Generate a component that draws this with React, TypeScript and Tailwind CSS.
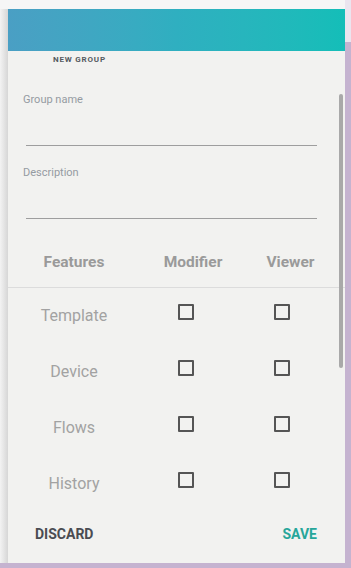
import React from 'react'

const FEATURES = ['Template', 'Device', 'Flows', 'History']

function Box() {
  return <span className="block w-4 h-4 border-2 border-[#555555] rounded-[1px]" />
}

function Field({ label }: { label: string }) {
  return (
    <div className="flex flex-col">
      <span className="pl-[15px] text-[11px] leading-[14px] text-[#959ba2]">{label}</span>
      <div className="ml-[18px] w-[291px] h-[39px] border-b border-[#9e9e9e]" />
    </div>
  )
}

export default function App() {
  return (
    <div
      className="w-[351px] h-[568px] flex bg-[#c5b3d0] overflow-hidden"
      style={{ fontFamily: 'Roboto, "Liberation Sans", sans-serif' }}
    >
      <div className="w-[345px] flex flex-col">
        <div className="h-[9px] bg-[#f6f6f6] shrink-0" />
        <div className="flex h-[554px]">
          <div className="w-2 bg-gradient-to-r from-[#f3f3f3] to-[#d6d6d6]" />
          <div className="relative flex-1 flex flex-col bg-[#f2f2f0]">
            {/* header band */}
            <div className="h-[42px] shrink-0 bg-gradient-to-r from-[#4a9fc4] via-[#2fafc0] to-[#14beb8]" />
            <div className="pl-[45px] mt-[3px] text-[8px] leading-[12px] font-bold tracking-[0.1em] text-[#555a60]">
              NEW GROUP
            </div>

            {/* form */}
            <div className="mt-[27px]">
              <Field label="Group name" />
            </div>
            <div className="mt-[20px]">
              <Field label="Description" />
            </div>

            {/* permissions table */}
            <div className="grid grid-cols-[132px_106px_89px] pt-[33px] pb-[15px] border-b border-[#dcdcdc] text-[15.5px] leading-[20px] font-bold text-[#9a9a9a]">
              <span className="text-center">Features</span>
              <span className="text-center">Modifier</span>
              <span className="text-center">Viewer</span>
            </div>
            {FEATURES.map((f) => (
              <div key={f} className="grid grid-cols-[132px_106px_89px] h-[56px] items-center">
                <span className="text-center text-[16px] text-[#a2a2a2]">{f}</span>
                <div className="flex justify-center pr-[14px] mb-[9px]">
                  <Box />
                </div>
                <div className="flex justify-center pr-[17px] mb-[9px]">
                  <Box />
                </div>
              </div>
            ))}

            {/* actions */}
            <div className="h-[44px] flex items-center justify-between pl-[27px] pr-[28px] text-[14px] font-bold">
              <span className="text-[#4a4c52]">DISCARD</span>
              <span className="text-[#26a69a]">SAVE</span>
            </div>

            {/* scrollbar thumb */}
            <div className="absolute left-[331px] top-[85px] w-1 h-[274px] rounded-sm bg-[#a9a9a9]" />
          </div>
        </div>
      </div>
      <div className="w-[6px] flex flex-col">
        <div className="h-[42px] bg-[#ebe5ef]" />
      </div>
    </div>
  )
}
